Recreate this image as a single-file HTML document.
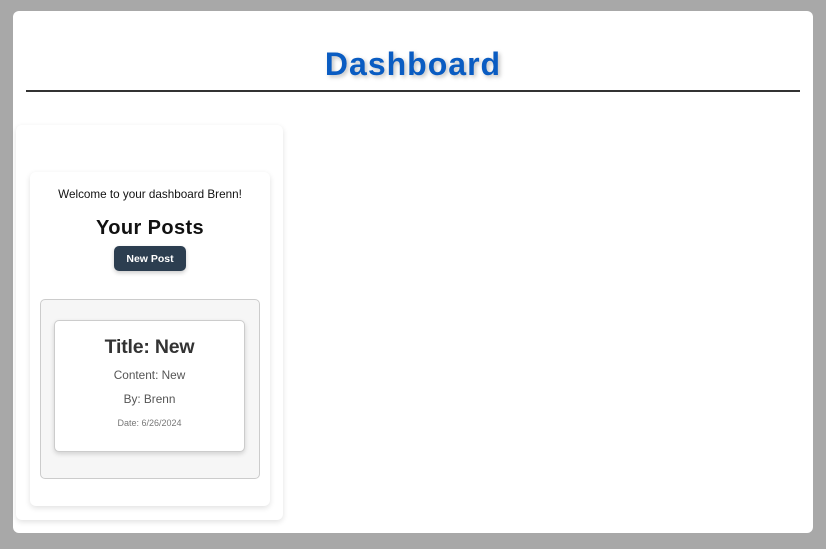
<!DOCTYPE html>
<html><head><meta charset="utf-8"><style>
*{box-sizing:border-box;margin:0;padding:0}
body{width:826px;height:549px;background:#a8a8a8;font-family:"Liberation Sans",Arial,sans-serif;position:relative;overflow:hidden}
.panel{position:absolute;left:13px;top:11px;width:800px;height:522px;background:#fff;border-radius:6px}
h1{position:absolute;left:0;width:100%;top:33px;text-align:center;font-size:32px;font-weight:bold;color:#0a5cc2;letter-spacing:1px;text-shadow:2px 2px 4px rgba(0,0,0,.25);line-height:40px}
.line{position:absolute;left:13px;top:79px;width:774px;height:2px;background:#333}
.outer{position:absolute;left:3px;top:114px;width:267px;height:395px;background:#fff;border-radius:6px;box-shadow:0 2px 6px rgba(0,0,0,.12)}
.inner{position:absolute;left:14px;top:47px;width:240px;height:334px;background:#fff;border-radius:6px;box-shadow:0 2px 6px rgba(0,0,0,.12);text-align:center}
.welcome{position:absolute;top:16px;width:100%;font-size:11.7px;color:#111}
.yp{position:absolute;top:45px;width:100%;font-size:20px;font-weight:bold;color:#111;letter-spacing:.4px}
.btn{position:absolute;left:84px;top:74px;width:72px;height:25px;background:#2c3e50;color:#fff;font-size:10.5px;font-weight:bold;line-height:27px;border-radius:5px;box-shadow:0 2px 4px rgba(0,0,0,.2)}
.gray{position:absolute;left:10px;top:127px;width:220px;height:180px;background:#f6f6f6;border:1px solid #ccc;border-radius:5px}
.card{position:absolute;left:13px;top:20px;width:191px;height:132px;background:#fff;border:1px solid #ccc;border-radius:5px;box-shadow:0 2px 5px rgba(0,0,0,.15)}
.t{position:absolute;top:15px;width:100%;font-size:19.5px;font-weight:bold;color:#333;letter-spacing:-.2px}
.c{position:absolute;top:47px;width:100%;font-size:11.8px;color:#555}
.b{position:absolute;top:71px;width:100%;font-size:11.8px;color:#555}
.d{position:absolute;top:97px;width:100%;font-size:9px;color:#777}
</style></head><body>
<div class="panel">
<h1>Dashboard</h1>
<div class="line"></div>
<div class="outer"><div class="inner">
<div class="welcome">Welcome to your dashboard Brenn!</div>
<div class="yp">Your Posts</div>
<div class="btn">New Post</div>
<div class="gray"><div class="card">
<div class="t">Title: New</div>
<div class="c">Content: New</div>
<div class="b">By: Brenn</div>
<div class="d">Date: 6/26/2024</div>
</div></div>
</div></div>
</div>
</body></html>
